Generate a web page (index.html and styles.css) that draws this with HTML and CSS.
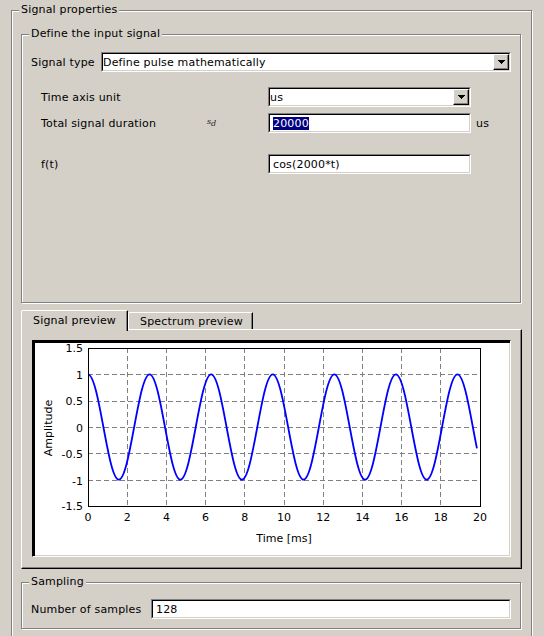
FILE: index.html
```html
<!DOCTYPE html>
<html>
<head>
<meta charset="utf-8">
<title>Signal properties</title>
<link rel="stylesheet" href="styles.css">
</head>
<body>
<div class="group outer">
  <span class="group-title">Signal properties</span>

  <div class="group input-group">
    <span class="group-title">Define the input signal</span>
    <div class="row">
      <span class="row-label type-label">Signal type</span>
      <div class="combo grow">
        <div class="combo-inner">
          <span class="combo-text">Define pulse mathematically</span>
          <span class="combo-btn"><svg class="arrow" width="7" height="4" viewBox="0 0 7 4"><path d="M0 0h7v1h-1v1h-1v1h-1v1h-1v-1h-1v-1h-1v-1h-1z"/></svg></span>
        </div>
      </div>
    </div>

    <div class="params">
      <div class="param-row">
        <span class="param-label">Time axis unit</span>
        <span class="param-sym"></span>
        <div class="combo">
          <div class="combo-inner">
            <span class="combo-text">us</span>
            <span class="combo-btn"><svg class="arrow" width="7" height="4" viewBox="0 0 7 4"><path d="M0 0h7v1h-1v1h-1v1h-1v1h-1v-1h-1v-1h-1v-1h-1z"/></svg></span>
          </div>
        </div>
      </div>
      <div class="param-row">
        <span class="param-label">Total signal duration</span>
        <span class="param-sym"><span class="sym">s<sub>d</sub></span></span>
        <div class="field"><div class="field-inner"><span class="sel">20000</span></div></div>
        <span class="param-unit">us</span>
      </div>
      <div class="param-row gap-above">
        <span class="param-label">f(t)</span>
        <span class="param-sym"></span>
        <div class="field"><div class="field-inner">cos(2000*t)</div></div>
      </div>
    </div>
  </div>

  <div class="tabs">
    <div class="tab active">Signal preview</div>
    <div class="tab">Spectrum preview</div>
  </div>
  <div class="tab-panel">
    <div class="canvas">
      <svg class="plot" width="474" height="212" viewBox="0 0 474 212">
        <g class="grid">
          <line x1="92.2" y1="5" x2="92.2" y2="163"/>
          <line x1="131.4" y1="5" x2="131.4" y2="163"/>
          <line x1="170.6" y1="5" x2="170.6" y2="163"/>
          <line x1="209.8" y1="5" x2="209.8" y2="163"/>
          <line x1="249" y1="5" x2="249" y2="163"/>
          <line x1="288.2" y1="5" x2="288.2" y2="163"/>
          <line x1="327.4" y1="5" x2="327.4" y2="163"/>
          <line x1="366.6" y1="5" x2="366.6" y2="163"/>
          <line x1="405.8" y1="5" x2="405.8" y2="163"/>
          <line x1="53" y1="31.5" x2="445" y2="31.5"/>
          <line x1="53" y1="58.2" x2="445" y2="58.2"/>
          <line x1="53" y1="84.5" x2="445" y2="84.5"/>
          <line x1="53" y1="110.8" x2="445" y2="110.8"/>
          <line x1="53" y1="137.5" x2="445" y2="137.5"/>
        </g>
        <path class="curve" transform="translate(53,84) scale(19.6,-52.667)" d="M0,1
          c0.28425,0 0.52925,-0.4877 0.7854,-1 c0.25615,-0.5123 0.50115,-1 0.7854,-1 c0.28425,0 0.52925,0.4877 0.7854,1 c0.25615,0.5123 0.50115,1 0.7854,1
          c0.28425,0 0.52925,-0.4877 0.7854,-1 c0.25615,-0.5123 0.50115,-1 0.7854,-1 c0.28425,0 0.52925,0.4877 0.7854,1 c0.25615,0.5123 0.50115,1 0.7854,1
          c0.28425,0 0.52925,-0.4877 0.7854,-1 c0.25615,-0.5123 0.50115,-1 0.7854,-1 c0.28425,0 0.52925,0.4877 0.7854,1 c0.25615,0.5123 0.50115,1 0.7854,1
          c0.28425,0 0.52925,-0.4877 0.7854,-1 c0.25615,-0.5123 0.50115,-1 0.7854,-1 c0.28425,0 0.52925,0.4877 0.7854,1 c0.25615,0.5123 0.50115,1 0.7854,1
          c0.28425,0 0.52925,-0.4877 0.7854,-1 c0.25615,-0.5123 0.50115,-1 0.7854,-1 c0.28425,0 0.52925,0.4877 0.7854,1 c0.25615,0.5123 0.50115,1 0.7854,1
          c0.28425,0 0.52925,-0.4877 0.7854,-1 c0.25615,-0.5123 0.50115,-1 0.7854,-1 c0.28425,0 0.52925,0.4877 0.7854,1 c0.25615,0.5123 0.50115,1 0.7854,1
          c0.28425,0 0.52925,-0.4877 0.7854,-1 q0.1044,-0.2088 0.2087,-0.4055"/>
        <rect class="frame" x="53.5" y="5.5" width="392" height="158"/>
        <g class="ticklabels ylabels">
          <text x="48" y="9">1.5</text>
          <text x="48" y="35.5">1</text>
          <text x="48" y="62">0.5</text>
          <text x="48" y="88.5">0</text>
          <text x="48" y="115">-0.5</text>
          <text x="48" y="141.5">-1</text>
          <text x="48" y="167">-1.5</text>
        </g>
        <g class="ticklabels xlabels">
          <text x="53" y="178">0</text>
          <text x="92.2" y="178">2</text>
          <text x="131.4" y="178">4</text>
          <text x="170.6" y="178">6</text>
          <text x="209.8" y="178">8</text>
          <text x="249" y="178">10</text>
          <text x="288.2" y="178">12</text>
          <text x="327.4" y="178">14</text>
          <text x="366.6" y="178">16</text>
          <text x="405.8" y="178">18</text>
          <text x="445" y="178">20</text>
        </g>
        <text class="axis-title" x="249" y="199">Time [ms]</text>
        <text class="axis-title" transform="translate(16.5,85) rotate(-90)" x="0" y="0">Amplitude</text>
      </svg>
    </div>
  </div>

  <div class="group sampling">
    <span class="group-title">Sampling</span>
    <div class="row">
      <span class="row-label samples-label">Number of samples</span>
      <div class="field grow"><div class="field-inner">128</div></div>
    </div>
  </div>
</div>
</body>
</html>
```

FILE: styles.css
```css
* {
  box-sizing: border-box;
}

html {
  overflow: hidden;
}

html, body {
  margin: 0;
  padding: 0;
}

body {
  width: 544px;
  height: 636px;
  overflow: hidden;
  background: #d4d0c8;
  color: #000;
  font-family: "DejaVu Sans", "Liberation Sans", sans-serif;
  font-size: 11px;
  line-height: 13px;
  letter-spacing: 0.17px;
}

/* ---------- etched group boxes ---------- */
.group {
  position: relative;
  border: 1px solid #808080;
  box-shadow: inset 1px 1px 0 #fff, 1px 1px 0 #fff;
}

.group-title {
  position: absolute;
  top: -8px;
  left: 7px;
  padding: 0 2px;
  background: #d4d0c8;
  white-space: nowrap;
  line-height: 13px;
}

.outer {
  width: 521px;
  margin: 10px 0 0 11px;
  padding: 23px 10px 12px 9px;
}

.input-group {
  height: 269px;
  padding: 17px 9px 0 9px;
}

.sampling {
  height: 47px;
  margin-top: 13px;
  padding: 16px 9px 0 9px;
}

/* ---------- rows ---------- */
.row {
  display: flex;
  align-items: center;
}

.row-label {
  white-space: nowrap;
}

.type-label {
  flex: 0 0 70px;
}

.samples-label {
  flex: 0 0 120px;
}

.grow {
  flex: 1 1 auto;
}

.params {
  display: flex;
  flex-direction: column;
  gap: 6px;
  margin: 15px 0 0 10px;
}

.param-row {
  display: grid;
  grid-template-columns: 166px 61px 203px auto;
  align-items: center;
  height: 20px;
}

.gap-above {
  margin-top: 15px;
}

.param-label {
  white-space: nowrap;
}

.param-sym {
  display: flex;
  align-items: center;
  padding-bottom: 4px;
}

.sym {
  font-family: "DejaVu Serif", "Liberation Serif", serif;
  font-style: italic;
  font-size: 8px;
  line-height: 9px;
  letter-spacing: 0;
  color: #222;
}

.sym sub {
  font-size: 8px;
  line-height: 0;
  vertical-align: -2px;
}

.param-unit {
  padding-left: 5px;
}

/* ---------- sunken widgets ---------- */
.combo,
.field {
  height: 20px;
  border: 1px solid;
  border-color: #808080 #fff #fff #808080;
  background: #fff;
}

.combo-inner,
.field-inner {
  height: 100%;
  display: flex;
  align-items: center;
  border: 1px solid;
  border-color: #000 #d4d0c8 #d4d0c8 #000;
  background: #fff;
  white-space: nowrap;
  overflow: hidden;
}

.field-inner {
  padding-left: 3px;
}

.combo-text {
  flex: 1 1 auto;
  overflow: hidden;
}

.combo-btn {
  flex: 0 0 16px;
  width: 16px;
  height: 16px;
  display: flex;
  align-items: center;
  justify-content: center;
  border: 1px solid;
  border-color: #fff #000 #000 #fff;
  box-shadow: inset -1px -1px 0 #808080;
  background: #d4d0c8;
}

.arrow {
  display: block;
  fill: #000;
  shape-rendering: crispEdges;
}

.sel {
  background: #000080;
  color: #fff;
}

/* ---------- tabs ---------- */
.tabs {
  display: flex;
  align-items: flex-end;
  height: 19px;
  margin-top: 7px;
}

.tab {
  width: 125px;
  height: 17px;
  padding: 2px 0 0 11px;
  border-top: 1px solid #fff;
  border-left: 1px solid #fff;
  border-right: 1px solid #000;
  border-radius: 2px 1px 0 0;
  box-shadow: inset -1px 0 0 #808080;
  background: #d4d0c8;
  white-space: nowrap;
}

.tab.active {
  position: relative;
  z-index: 1;
  width: 107px;
  height: 21px;
  margin-bottom: -2px;
  padding-top: 3px;
}

.tab-panel {
  height: 240px;
  margin-right: -1px;
  padding: 10px 10px 11px 10px;
  border: 1px solid;
  border-color: #fff #000 #000 #fff;
  box-shadow: inset -1px -1px 0 #808080;
}

.canvas {
  width: 479px;
  height: 217px;
  padding: 2px 1px 1px 2px;
  border: 1px solid;
  border-color: #000 #fff #fff #000;
  box-shadow: inset 2px 2px 0 #000, inset -1px -1px 0 #d4d0c8;
  background: #fff;
}

/* ---------- plot ---------- */
.plot {
  display: block;
  font-family: "DejaVu Sans", "Liberation Sans", sans-serif;
  font-size: 11px;
  letter-spacing: 0;
}

.grid line {
  stroke: #808080;
  stroke-width: 1;
  stroke-dasharray: 5 3;
  shape-rendering: crispEdges;
}

.curve {
  fill: none;
  stroke: #0000ff;
  stroke-width: 1.8;
  vector-effect: non-scaling-stroke;
}

.frame {
  fill: none;
  stroke: #000;
  stroke-width: 1;
  shape-rendering: crispEdges;
}

.ticklabels text {
  fill: #000;
}

.ylabels text {
  text-anchor: end;
}

.xlabels text {
  text-anchor: middle;
}

.axis-title {
  fill: #000;
  text-anchor: middle;
}
```
